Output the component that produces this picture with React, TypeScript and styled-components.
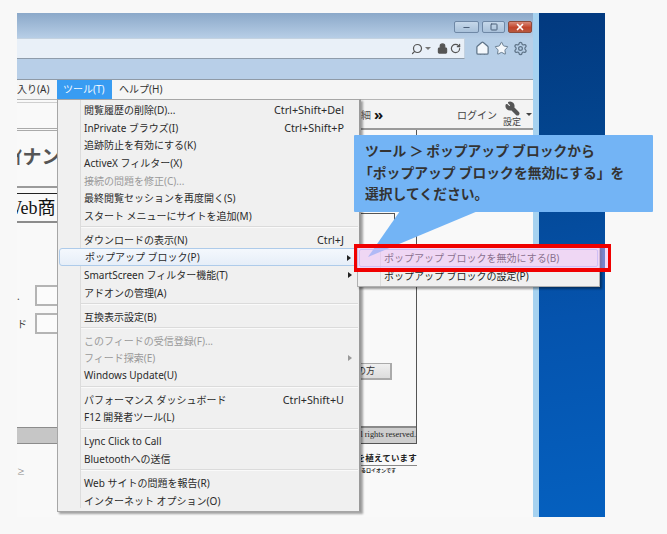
import React, { FC, ReactElement } from 'react';
import styled, { createGlobalStyle } from 'styled-components';
import { Search, Lock, RotateCw, Home, Star, Settings, Wrench, Minus, Square, X } from 'lucide-react';

const GlobalStyle = createGlobalStyle`
    html, body {
        margin: 0;
        padding: 0;
        background: #f8f8f8;
        font-family: "Noto Sans", "Noto Sans CJK JP", sans-serif;
    }
`;

type MenuEntry = { label?: string; shortcut?: string; disabled?: boolean; arrow?: boolean; current?: boolean; sep?: boolean };

const entries: MenuEntry[] = [
    { label: '閲覧履歴の削除(D)...', shortcut: 'Ctrl+Shift+Del' },
    { label: 'InPrivate ブラウズ(I)', shortcut: 'Ctrl+Shift+P' },
    { label: '追跡防止を有効にする(K)' },
    { label: 'ActiveX フィルター(X)' },
    { label: '接続の問題を修正(C)...', disabled: true },
    { label: '最終閲覧セッションを再度開く(S)' },
    { label: 'スタート メニューにサイトを追加(M)' },
    { sep: true },
    { label: 'ダウンロードの表示(N)', shortcut: 'Ctrl+J' },
    { label: 'ポップアップ ブロック(P)', arrow: true, current: true },
    { label: 'SmartScreen フィルター機能(T)', arrow: true },
    { label: 'アドオンの管理(A)' },
    { sep: true },
    { label: '互換表示設定(B)' },
    { sep: true },
    { label: 'このフィードの受信登録(F)...', disabled: true },
    { label: 'フィード探索(E)', disabled: true, arrow: true },
    { label: 'Windows Update(U)' },
    { sep: true },
    { label: 'パフォーマンス ダッシュボード', shortcut: 'Ctrl+Shift+U' },
    { label: 'F12 開発者ツール(L)' },
    { sep: true },
    { label: 'Lync Click to Call' },
    { label: 'Bluetoothへの送信' },
    { sep: true },
    { label: 'Web サイトの問題を報告(R)' },
    { label: 'インターネット オプション(O)' },
];

const App: FC = (): ReactElement => {
    return (
        <Stage>
            <GlobalStyle />
            <Window>
                <TitleBar>
                    <WinButton width={25}><Minus size={9} strokeWidth={3} /></WinButton>
                    <WinButton width={23}><Square size={8} strokeWidth={3} /></WinButton>
                    <WinButton width={24} close><X size={10} strokeWidth={4} /></WinButton>
                </TitleBar>
                <AddressRow>
                    <AddressField>
                        <Search size={12} strokeWidth={2.4} style={{ transform: 'scaleX(-1)' }} />
                        <AddressCaret />
                        <Lock size={11} strokeWidth={2.5} fill="#555" />
                        <RotateCw size={11} strokeWidth={2.6} />
                    </AddressField>
                    <BrowserTools>
                        <Home size={15} strokeWidth={2} fill="#f4f8fc" />
                        <Star size={15} strokeWidth={1.5} fill="#f4f8fc" />
                        <Settings size={15} strokeWidth={2} />
                    </BrowserTools>
                </AddressRow>
                <TabBand />
                <MenuBar>
                    <MenuBarItem width={40}>入り(A)</MenuBarItem>
                    <MenuBarItem width={55} active>ツール(T)</MenuBarItem>
                    <MenuBarItem width={60}>ヘルプ(H)</MenuBarItem>
                </MenuBar>
                <PageArea>
                    <LeftStrip>
                        <TopRule />
                        <BannerText>ｲナン</BannerText>
                        <BoxedTitle>Web商</BoxedTitle>
                        <FormRow>
                            <span>.</span>
                            <Field />
                        </FormRow>
                        <FormRow>
                            <span>ド</span>
                            <Field />
                        </FormRow>
                        <GreyBar />
                        <TinyMark>≥</TinyMark>
                    </LeftStrip>
                    <RightStrip>
                        <PageToolbar>
                            <Crumb>細</Crumb>
                            <Chevrons>»</Chevrons>
                            <Login>ログイン</Login>
                            <SettingsTool>
                                <Wrench size={15} strokeWidth={2.5} fill="#555" color="#555" />
                                <span>設定</span>
                            </SettingsTool>
                            <SmallCaret />
                        </PageToolbar>
                        <PageBody>
                            <Panel>
                                <CellLine />
                                <SmallButton>の方</SmallButton>
                                <Copyright>ll rights reserved.</Copyright>
                            </Panel>
                            <Tagline>を植えています</Tagline>
                            <TaglineSub>るロイオンです</TaglineSub>
                        </PageBody>
                    </RightStrip>
                </PageArea>
            </Window>
            <Desktop />

            <Menu>
                {entries.map((e: MenuEntry, i: number) =>
                    e.sep ? (
                        <Separator key={i} />
                    ) : (
                        <MenuRow key={i} disabled={e.disabled} current={e.current}>
                            <span>{e.label}</span>
                            {e.shortcut && <Shortcut>{e.shortcut}</Shortcut>}
                            {e.arrow && <Arrow disabled={e.disabled} />}
                        </MenuRow>
                    )
                )}
            </Menu>

            <SubMenu>
                <SubRow>ポップアップ ブロックを無効にする(B)</SubRow>
                <SubRow>ポップアップ ブロックの設定(P)</SubRow>
            </SubMenu>

            <CalloutTail />
            <HighlightTint />
            <RedFrame />
            <Callout>
                ツール<WideMark>＞</WideMark>ポップアップ ブロックから
                <br />
                <Bracket>「</Bracket>ポップアップ ブロックを無効にする」を
                <br />
                選択してください。
            </Callout>
        </Stage>
    );
};

const Stage = styled.div`
    position: relative;
    width: 667px;
    height: 534px;
    box-sizing: border-box;
    padding: 13px 62px 17px 17px;
    display: flex;
    overflow: hidden;
    color: #222;
`;

const Window = styled.div`
    box-sizing: content-box;
    width: 516px;
    display: flex;
    flex-direction: column;
    border-right: 6px solid transparent;
    border-image: linear-gradient(90deg, #a9bdd3 33%, #a6d2f0 33%) 1;
    background: #f9f9f9;
    overflow: hidden;
`;

const Desktop = styled.div`
    flex: 1;
    background: linear-gradient(172deg, #02397f 0%, #03458f 25%, #0553ad 60%, #0560bf 100%);
`;

const TitleBar = styled.div`
    height: 25px;
    flex: none;
    box-sizing: border-box;
    padding: 8px 1px 0 0;
    display: flex;
    justify-content: flex-end;
    gap: 3px;
    align-items: flex-start;
    background: linear-gradient(#8ba8c9, #b7cee6);
`;

const WinButton = styled.div<{ close?: boolean; width: number }>`
    width: ${p => p.width}px;
    height: 12px;
    border: 1px solid ${p => (p.close ? '#8c4a3a' : '#6f88a6')};
    box-sizing: border-box;
    border-radius: 2px;
    display: flex;
    align-items: center;
    justify-content: center;
    color: ${p => (p.close ? '#fff' : '#4b5f78')};
    background: ${p =>
        p.close ? 'linear-gradient(#d98a78, #c2452c 55%, #b8583e)' : 'linear-gradient(#c6d8ea, #a9c1da)'};
`;

const AddressRow = styled.div`
    height: 21px;
    flex: none;
    display: flex;
    align-items: center;
    background: #b7cfe7;
`;

const AddressField = styled.div`
    width: 448px;
    height: 21px;
    box-sizing: border-box;
    border: 1px solid #c4d2e0;
    border-left: 0;
    border-bottom-color: #8e9cab;
    background: #e9f0f8;
    display: flex;
    align-items: center;
    justify-content: flex-end;
    gap: 2px;
    padding-right: 3px;
    color: #555;
`;

const BrowserTools = styled.div`
    display: flex;
    gap: 4px;
    padding-left: 10px;
    color: #5f7488;
`;

const SmallCaret = styled.i`
    width: 0;
    height: 0;
    border: 3px solid transparent;
    border-top: 3px solid #444;
    border-bottom: 0;
`;

const AddressCaret = styled(SmallCaret)`
    margin: 0 4px 0 0;
    border-top-color: #777;
`;

const TabBand = styled.div`
    height: 21px;
    flex: none;
    box-sizing: border-box;
    background: #b8cfe8;
    border-bottom: 1px solid #8f9aa6;
`;

const MenuBar = styled.div`
    height: 20px;
    flex: none;
    box-sizing: border-box;
    display: flex;
    background: #f5f5f5;
    border-bottom: 1px solid #b5b5b5;
    font-size: 10px;
`;

const MenuBarItem = styled.div<{ active?: boolean; width: number }>`
    width: ${p => p.width}px;
    flex: none;
    box-sizing: border-box;
    height: 19px;
    line-height: 18px;
    padding-left: ${p => (p.active ? 6 : 0)}px;
    margin-right: ${p => (p.active ? 7 : 0)}px;
    color: ${p => (p.active ? '#f4f9ff' : '#333')};
    background: ${p => (p.active ? '#389cf2' : 'transparent')};
    white-space: nowrap;
`;

const PageArea = styled.div`
    flex: 1;
    display: flex;
    justify-content: space-between;
    min-height: 0;
`;

const LeftStrip = styled.div`
    width: 40px;
    overflow: hidden;
    display: flex;
    flex-direction: column;
`;

const TopRule = styled.div`
    height: 29px;
    flex: none;
    margin-top: 2px;
    box-sizing: border-box;
    border-top: 1px solid #cfcfcf;
    border-bottom: 3px double #aaa;
`;

const BannerText = styled.div`
    height: 57px;
    flex: none;
    padding-top: 14px;
    box-sizing: border-box;
    font-size: 19px;
    line-height: 24px;
    font-weight: 700;
    color: #555;
    border-bottom: 2px solid #9b9b9b;
    white-space: nowrap;
    text-indent: -4px;
`;

const BoxedTitle = styled.div`
    margin-top: 5px;
    height: 30px;
    flex: none;
    box-sizing: border-box;
    border-top: 1px solid #222;
    border-bottom: 2px solid #8c8c8c;
    font-family: "Liberation Serif", "Noto Sans CJK JP", serif;
    font-size: 18px;
    line-height: 28px;
    text-indent: -12px;
    white-space: nowrap;
    color: #111;
`;

const FormRow = styled.div`
    display: flex;
    flex: none;
    justify-content: space-between;
    align-items: center;
    height: 21px;
    margin-top: 7px;
    font-size: 10px;
    color: #444;
    &:nth-of-type(4) {
        margin-top: 62px;
    }
`;

const Field = styled.div`
    width: 22px;
    height: 21px;
    box-sizing: border-box;
    border: 2px solid #b4b4b4;
    border-right: 0;
    background: #fbfbfb;
`;

const GreyBar = styled.div`
    height: 17px;
    flex: none;
    margin-top: 93px;
    background: #c6c6c6;
    border-top: 1px solid #8c8c8c;
    border-bottom: 1px solid #8c8c8c;
    box-sizing: border-box;
`;

const TinyMark = styled.div`
    margin-top: 22px;
    font-size: 8px;
    color: #888;
`;

const RightStrip = styled.div`
    width: 172px;
    display: flex;
    flex-direction: column;
`;

const PageToolbar = styled.div`
    height: 30px;
    flex: none;
    box-sizing: border-box;
    display: flex;
    align-items: center;
    background: #f3f3f3;
    border-bottom: 2px solid #9a9a9a;
    font-size: 10px;
    color: #444;
    padding: 0 2px 0 0;
`;

const Crumb = styled.span`
    margin-top: 1px;
    width: 13px;
    flex: none;
    color: #555;
`;

const Chevrons = styled.b`
    font-size: 15px;
    width: 10px;
    flex: none;
    color: #111;
    line-height: 14px;
`;

const Login = styled.span`
    margin-left: 73px;
    flex: none;
    white-space: nowrap;
`;

const SettingsTool = styled.div`
    margin: 0 3px 0 4px;
    width: 22px;
    flex: none;
    display: flex;
    flex-direction: column;
    align-items: center;
    font-size: 9px;
    line-height: 11px;
    svg {
        transform: scaleX(-1);
    }
`;

const PageBody = styled.div`
    flex: 1;
    display: flex;
    flex-direction: column;
    width: 56px;
`;

const Panel = styled.div`
    position: relative;
    height: 314px;
    flex: none;
    box-sizing: border-box;
    border-right: 1px solid #555;
    border-bottom: 1px solid #555;
    display: flex;
    flex-direction: column;
    align-items: flex-start;
`;

const CellLine = styled.div`
    width: 34px;
    height: 84px;
    flex: none;
    box-sizing: border-box;
    border-bottom: 1px solid #555;
    position: relative;
    &::after {
        content: '';
        position: absolute;
        right: 0;
        bottom: -9px;
        height: 9px;
        border-right: 1px solid #555;
    }
`;

const SmallButton = styled.div`
    margin-top: 149px;
    width: 31px;
    height: 17px;
    box-sizing: border-box;
    border: 1px solid #aaa;
    border-width: 1px 2px 2px 0;
    background: linear-gradient(#f0f0f0, #dcdcdc);
    font-size: 9px;
    line-height: 14px;
    color: #333;
    text-indent: -4px;
    white-space: nowrap;
`;

const Copyright = styled.div`
    margin-top: auto;
    width: 100%;
    height: 17px;
    box-sizing: border-box;
    border-top: 2px solid #8a8a8a;
    background: #cecece;
    font-family: "Liberation Serif", serif;
    font-size: 8.3px;
    line-height: 14px;
    color: #222;
    white-space: nowrap;
    display: flex;
    justify-content: flex-end;
`;

const Tagline = styled.div`
    margin-top: 7px;
    height: 15px;
    flex: none;
    box-sizing: border-box;
    border-bottom: 1px solid #888;
    font-family: "Noto Sans CJK JP", serif;
    font-size: 8.5px;
    font-weight: 700;
    line-height: 13px;
    letter-spacing: 0.2px;
    white-space: nowrap;
    color: #222;
    display: flex;
    justify-content: flex-end;
`;

const TaglineSub = styled.div`
    margin-top: 1px;
    font-size: 5px;
    line-height: 6px;
    font-weight: 700;
    font-family: "Noto Sans CJK JP", sans-serif;
    color: #222;
    white-space: nowrap;
`;

const Menu = styled.div`
    position: absolute;
    left: 57px;
    top: 99px;
    width: 304px;
    height: 413px;
    box-sizing: border-box;
    padding: 1px 1px 0 0;
    background: #f0f0f0;
    border: 1px solid #a6a6a6;
    border-right: 2px solid #999;
    box-shadow: 2px 2px 2px rgba(0, 0, 0, 0.35);
    font-size: 10px;
    &::before {
        content: '';
        position: absolute;
        left: 22px;
        top: 0;
        bottom: 3px;
        border-left: 1px solid #dcdcdc;
    }
`;

const MenuRow = styled.div<{ disabled?: boolean; current?: boolean }>`
    position: relative;
    height: 17.6px;
    box-sizing: border-box;
    margin-left: ${p => (p.current ? 1 : 0)}px;
    padding: 0 14px 0 ${p => (p.current ? 25 : 26)}px;
    display: flex;
    align-items: center;
    justify-content: space-between;
    white-space: nowrap;
    color: ${p => (p.disabled ? '#9a9a9a' : '#2a2a2a')};
    ${p =>
        p.current &&
        `
        border: 1px solid #aecbea;
        border-radius: 3px;
        background: linear-gradient(#f4f8fd, #e6eef8);
    `}
`;

const Shortcut = styled.span`
    margin-left: auto;
    font-size: 10.8px;
`;

const Arrow = styled.i<{ disabled?: boolean }>`
    position: absolute;
    right: 6px;
    top: 6px;
    width: 0;
    height: 0;
    border: 3px solid transparent;
    border-left: 4px solid ${p => (p.disabled ? '#999' : '#222')};
    border-right: 0;
`;

const Separator = styled.div`
    height: 6.4px;
    margin-left: 23px;
    position: relative;
    &::after {
        content: '';
        position: absolute;
        left: 0;
        right: 0;
        top: 2px;
        height: 1px;
        background: #dbdbdb;
        box-shadow: 0 1px 0 #fafafa;
    }
`;

const SubMenu = styled.div`
    position: absolute;
    left: 357px;
    top: 247px;
    width: 243px;
    height: 40px;
    box-sizing: border-box;
    padding-top: 2px;
    background: #f0f0f0;
    border: 1px solid #b0b0b0;
    box-shadow: 2px 2px 2px rgba(0, 0, 0, 0.4);
    font-size: 10px;
    &::before {
        content: '';
        position: absolute;
        left: 22px;
        top: 0;
        bottom: 0;
        border-left: 1px solid #dcdcdc;
    }
`;

const SubRow = styled.div`
    height: 17.6px;
    line-height: 17.6px;
    padding-left: 26px;
    white-space: nowrap;
    color: #222;
`;

const CalloutTail = styled.div`
    position: absolute;
    left: 368px;
    top: 211px;
    width: 110px;
    height: 46px;
    background: #73b4f5;
    clip-path: polygon(32px 0, 110px 0, 0 100%);
`;

const HighlightTint = styled.div`
    position: absolute;
    left: 357px;
    top: 248px;
    width: 251px;
    height: 20px;
    background: rgba(238, 190, 248, 0.5);
    &::after {
        content: '';
        position: absolute;
        inset: 1px 10px 1px 2px;
        border: 1px solid rgba(200, 185, 245, 0.8);
        border-radius: 2px;
    }
`;

const RedFrame = styled.div`
    position: absolute;
    left: 354px;
    top: 244px;
    width: 257px;
    height: 28px;
    box-sizing: border-box;
    border-style: solid;
    border-color: #f00000;
    border-width: 4px 3px;
`;

const Callout = styled.div`
    position: absolute;
    left: 354px;
    top: 135px;
    width: 299px;
    height: 77px;
    box-sizing: border-box;
    padding: 5px 11px;
    border-radius: 1px;
    background: #73b4f5;
    font-family: "Noto Sans CJK JP", sans-serif;
    font-size: 13.8px;
    font-weight: 700;
    line-height: 21.5px;
    color: #333;
    white-space: nowrap;
`;

const WideMark = styled.span`
    margin: 0 3px;
`;

const Bracket = styled.span`
    margin-left: -6px;
`;

export default App;
